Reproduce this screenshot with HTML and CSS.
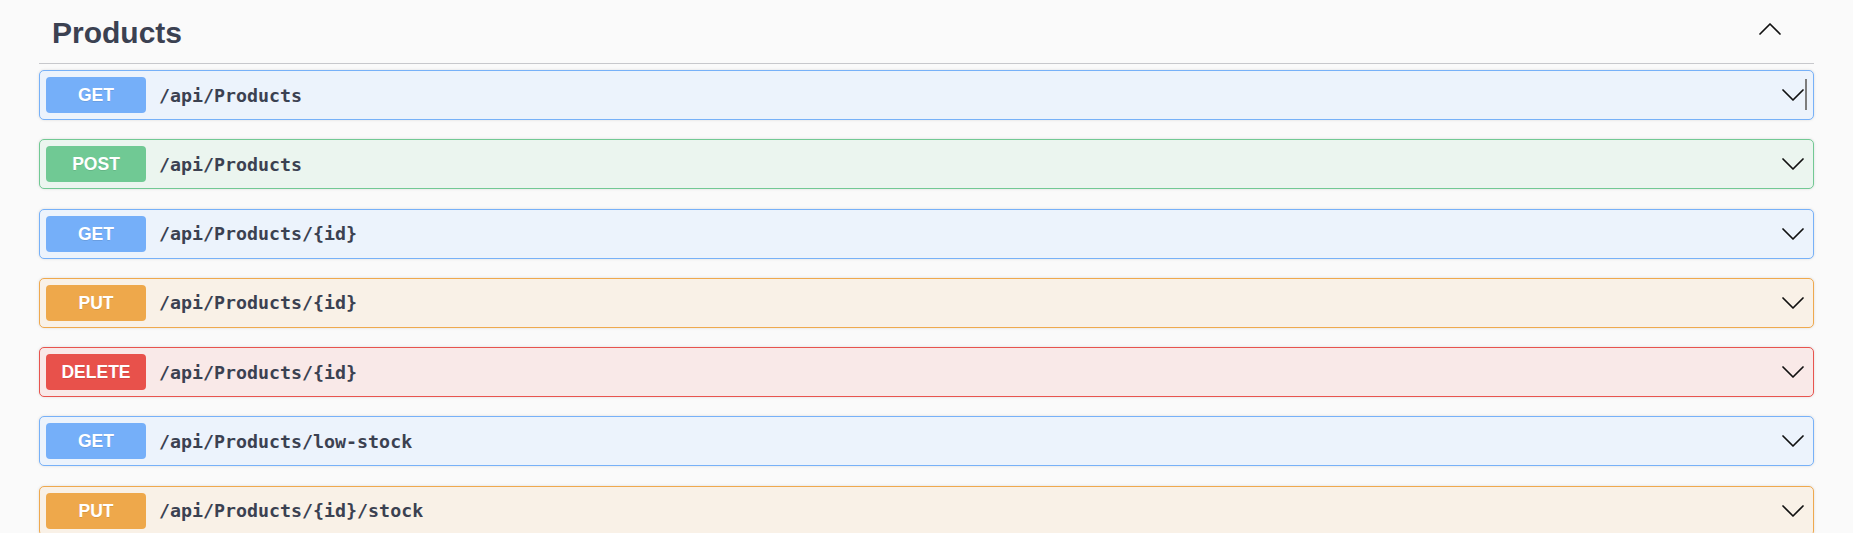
FILE: index.html
```html
<!DOCTYPE html>
<html lang="en">
<head>
<meta charset="utf-8">
<title>Products</title>
<link rel="stylesheet" href="styles.css">
</head>
<body>
<div class="wrapper">
  <div class="tag-header">
    <h3 class="tag-title">Products</h3>
    <svg class="tag-arrow" width="22" height="12" viewBox="0 0 22 12"><polyline points="1,11 11,1 21,11" fill="none" stroke="#111" stroke-width="1.7" stroke-linecap="round" stroke-linejoin="round"/></svg>
  </div>
  <div class="ops">
    <div class="op op-get">
      <span class="method">GET</span><span class="path">/api/Products</span>
      <svg class="op-arrow" width="22" height="12" viewBox="0 0 22 12"><polyline points="1,1 11,11 21,1" fill="none" stroke="#111" stroke-width="1.7" stroke-linecap="round" stroke-linejoin="round"/></svg>
      <span class="caret"></span>
    </div>
    <div class="op op-post">
      <span class="method">POST</span><span class="path">/api/Products</span>
      <svg class="op-arrow" width="22" height="12" viewBox="0 0 22 12"><polyline points="1,1 11,11 21,1" fill="none" stroke="#111" stroke-width="1.7" stroke-linecap="round" stroke-linejoin="round"/></svg>
    </div>
    <div class="op op-get">
      <span class="method">GET</span><span class="path">/api/Products/{id}</span>
      <svg class="op-arrow" width="22" height="12" viewBox="0 0 22 12"><polyline points="1,1 11,11 21,1" fill="none" stroke="#111" stroke-width="1.7" stroke-linecap="round" stroke-linejoin="round"/></svg>
    </div>
    <div class="op op-put">
      <span class="method">PUT</span><span class="path">/api/Products/{id}</span>
      <svg class="op-arrow" width="22" height="12" viewBox="0 0 22 12"><polyline points="1,1 11,11 21,1" fill="none" stroke="#111" stroke-width="1.7" stroke-linecap="round" stroke-linejoin="round"/></svg>
    </div>
    <div class="op op-delete">
      <span class="method">DELETE</span><span class="path">/api/Products/{id}</span>
      <svg class="op-arrow" width="22" height="12" viewBox="0 0 22 12"><polyline points="1,1 11,11 21,1" fill="none" stroke="#111" stroke-width="1.7" stroke-linecap="round" stroke-linejoin="round"/></svg>
    </div>
    <div class="op op-get">
      <span class="method">GET</span><span class="path">/api/Products/low-stock</span>
      <svg class="op-arrow" width="22" height="12" viewBox="0 0 22 12"><polyline points="1,1 11,11 21,1" fill="none" stroke="#111" stroke-width="1.7" stroke-linecap="round" stroke-linejoin="round"/></svg>
    </div>
    <div class="op op-put">
      <span class="method">PUT</span><span class="path">/api/Products/{id}/stock</span>
      <svg class="op-arrow" width="22" height="12" viewBox="0 0 22 12"><polyline points="1,1 11,11 21,1" fill="none" stroke="#111" stroke-width="1.7" stroke-linecap="round" stroke-linejoin="round"/></svg>
    </div>
  </div>
</div>
</body>
</html>
```
FILE: styles.css
```css
html, body {
  margin: 0;
  padding: 0;
  background: #fafafa;
  overflow: hidden;
}

.wrapper {
  padding: 0 39px;
}

.tag-header {
  display: flex;
  align-items: flex-start;
  padding: 16px 33px 13px 13px;
  border-bottom: 1px solid #c7c8cc;
  margin-bottom: 6px;
}

.tag-title {
  margin: 0;
  flex: 1;
  font-family: "Liberation Sans", Arial, sans-serif;
  font-weight: 700;
  font-size: 30px;
  line-height: 34px;
  color: #3b4151;
}

.tag-arrow {
  margin-top: 7px;
  display: block;
}

.ops {
  display: flex;
  flex-direction: column;
  gap: 19.3px;
}

.op {
  position: relative;
  box-sizing: border-box;
  height: 50px;
  flex: none;
  display: flex;
  align-items: center;
  padding: 0 6px;
  border: 1px solid;
  border-radius: 5px;
  box-shadow: 0 0 3px rgba(0, 0, 0, 0.12);
}

.method {
  width: 100px;
  height: 36px;
  line-height: 36px;
  border-radius: 4px;
  text-align: center;
  color: #fff;
  font-family: "Liberation Sans", Arial, sans-serif;
  font-weight: 700;
  font-size: 17.5px;
  text-shadow: 0 1px 0 rgba(0, 0, 0, 0.1);
}

.path {
  padding-left: 13px;
  font-family: "DejaVu Sans Mono", "Liberation Mono", monospace;
  font-weight: 700;
  font-size: 18.3px;
  color: #3b4151;
  flex: 1;
}

.op-arrow {
  display: block;
  margin-right: 3px;
}

.caret {
  position: absolute;
  right: 6px;
  top: 8px;
  width: 2px;
  height: 31px;
  background: #7d7d7d;
}

.op-get {
  background: #ecf3fc;
  border-color: #77b1f8;
}
.op-get .method { background: #75aff9; }

.op-post {
  background: #ebf5ef;
  border-color: #72c994;
}
.op-post .method { background: #70c994; }

.op-put {
  background: #f9f1e7;
  border-color: #efa94e;
}
.op-put .method { background: #eea84b; }

.op-delete {
  background: #f9e9e8;
  border-color: #e8544e;
}
.op-delete .method { background: #e8514b; }
```
